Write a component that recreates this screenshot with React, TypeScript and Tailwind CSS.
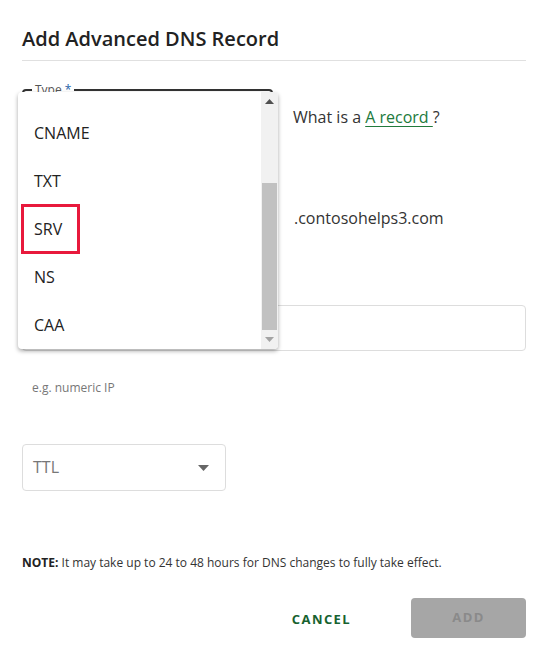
import React from "react";

const items = ["CNAME", "TXT", "SRV", "NS", "CAA"];

export default function App() {
  return (
    <div
      className="relative w-[548px] h-[663px] bg-white overflow-hidden text-[#222]"
      style={{ fontFamily: '"Open Sans", "Noto Sans", sans-serif' }}
    >
      <div className="px-[22px] pt-[25px]">
        <h1 className="text-[20px] leading-[28px] font-semibold text-[#222]">
          Add Advanced DNS Record
        </h1>
        <div className="mt-[7px] h-px bg-[#e0e0e0]" />

        {/* Type row */}
        <div className="mt-[28px] flex items-center gap-[20px]">
          <div className="relative w-[251px] h-[56px] border-2 border-[#333] rounded-[4px]">
            <span className="absolute -top-[9px] left-[8px] bg-white px-[3px] text-[12px] leading-[16px] text-[#555]">
              Type <span className="text-[#1e5fa8]">*</span>
            </span>
          </div>
          <div className="text-[16px] leading-[22px] text-[#333]">
            What is a{" "}
            <span className="text-[#217a3c] underline underline-offset-[3px]">A record </span>?
          </div>
        </div>

        {/* Name row */}
        <div className="mt-[45px] flex items-center gap-[21px]">
          <div className="w-[251px] h-[56px] border border-[#ddd] rounded-[4px]" />
          <div className="text-[16px] leading-[22px] text-[#333]">.contosohelps3.com</div>
        </div>

        {/* Value input */}
        <div className="mt-[59px] h-[46px] w-full border border-[#ddd] rounded-[4px]" />
        <div className="mt-[29px] pl-[10px] text-[12px] leading-[16px] text-[#777]">e.g. numeric IP</div>

        {/* TTL */}
        <div className="mt-[48px] w-[204px] h-[47px] border border-[#ddd] rounded-[4px] flex items-center justify-between pl-[10px] pr-[16px]">
          <span className="text-[16px] leading-[22px] text-[#777] -mt-[2px]">TTL</span>
          <svg width="11" height="6" viewBox="0 0 11 6">
            <path d="M0 0 L11 0 L5.5 6 Z" fill="#666" />
          </svg>
        </div>

        {/* Note */}
        <div className="mt-[64px] text-[12px] leading-[16px] text-[#333]">
          <span className="font-bold text-[#222]">NOTE:</span> It may take up to 24 to 48 hours for DNS changes to fully take effect.
        </div>

        {/* Buttons */}
        <div className="mt-[27px] flex justify-end items-center gap-[36px]">
          <button className="h-[40px] px-[24px] pt-[3px] text-[13px] font-bold tracking-[1.4px] text-[#17622f]">
            CANCEL
          </button>
          <button className="h-[40px] w-[115px] rounded-[4px] bg-[#a6a6a6] text-[13px] font-bold tracking-[1.4px] text-[#8a8a8a]">
            ADD
          </button>
        </div>
      </div>

      {/* Dropdown menu overlay */}
      <div className="absolute left-[18px] top-[92px] w-[260px] h-[257px] bg-white rounded-[4px] shadow-[0_2px_4px_rgba(0,0,0,0.35)] overflow-hidden flex">
        <div className="flex-1 pt-[17px]">
          {items.map((it) => (
            <div key={it} className="relative h-[48px] flex items-center pl-[16px] text-[16px] text-[#222]">
              {it === "SRV" && (
                <div className="absolute left-[3px] top-[-1px] w-[59px] h-[50px] border-[3px] border-[#e8193c]" />
              )}
              <span className="relative">{it}</span>
            </div>
          ))}
        </div>
        <div className="relative w-[17px] h-full bg-[#f1f1f1]">
          <svg className="absolute left-[4px] top-[7px]" width="9" height="5" viewBox="0 0 9 5">
            <path d="M0 5 L9 5 L4.5 0 Z" fill="#505050" />
          </svg>
          <div className="absolute left-[1px] right-[1px] top-[91px] h-[147px] bg-[#c1c1c1]" />
          <svg className="absolute left-[4px] bottom-[7px]" width="9" height="5" viewBox="0 0 9 5">
            <path d="M0 0 L9 0 L4.5 5 Z" fill="#a3a3a3" />
          </svg>
        </div>
      </div>
    </div>
  );
}
